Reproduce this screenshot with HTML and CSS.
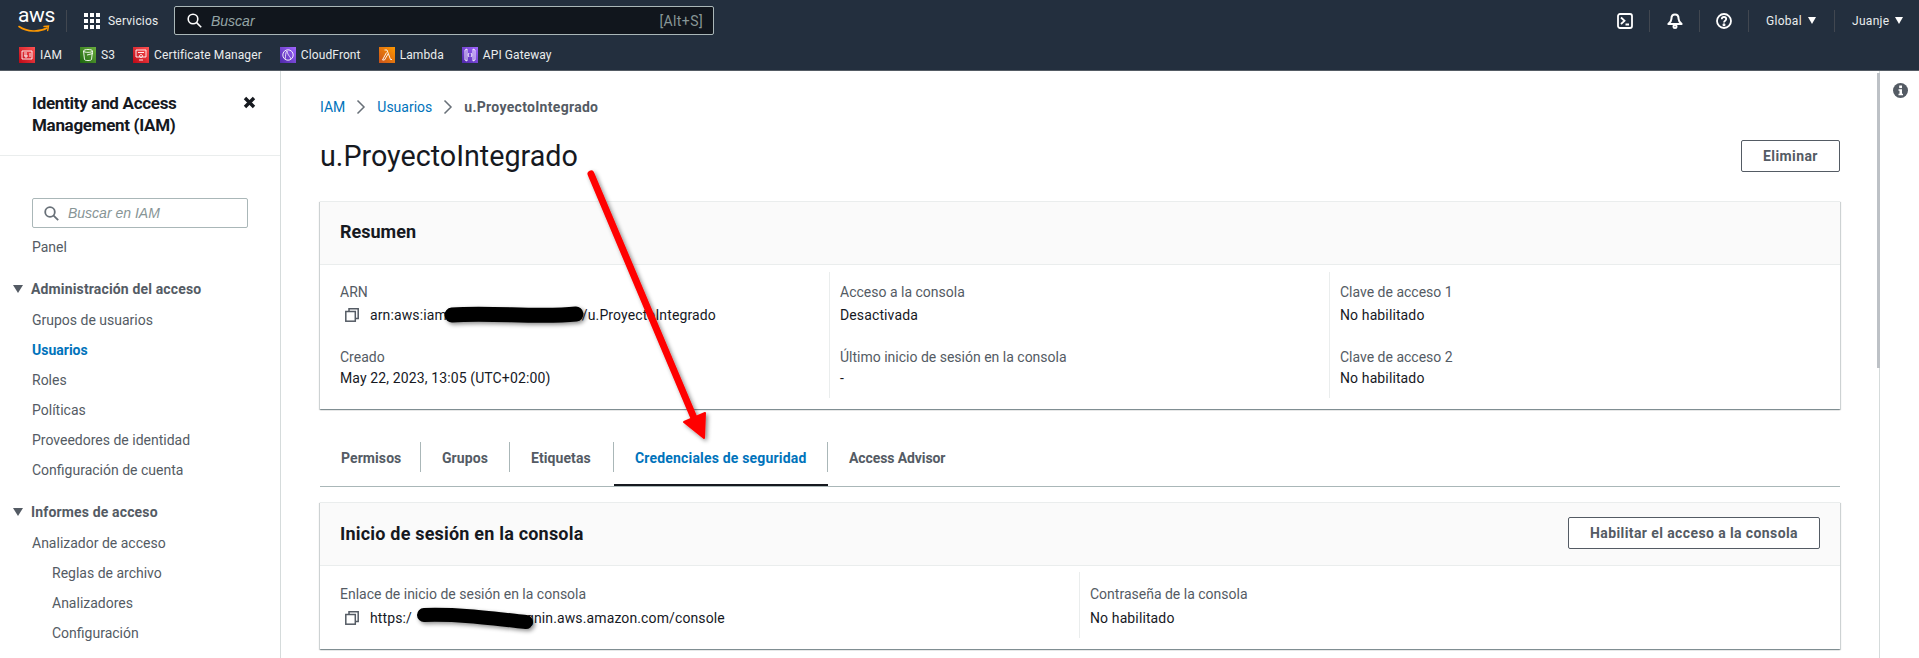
FILE: index.html
```html
<!DOCTYPE html>
<html lang="es">
<head>
	<meta charset="UTF-8">
	<title>u.ProyectoIntegrado - IAM</title>
	<link rel="stylesheet" href="styles.css">
</head>
<body>
	<header class="topbar">
		<div class="toprow">
			<div class="logo">
				<span class="logo-text">aws</span>
				<svg class="logo-smile" width="32" height="9" viewBox="0 0 32 9"><path d="M1 1.5C9 7 21 7.5 29 3" fill="none" stroke="#f90" stroke-width="1.6" stroke-linecap="round"/><path d="M26 1.5l4.500-.5-.8 4.500" fill="none" stroke="#f90" stroke-width="1.4" stroke-linecap="round"/></svg>
			</div>
			<span class="divider first"></span>
			<svg class="grid-icon" width="16" height="16" viewBox="0 0 16 16" fill="#fff"><rect width="4" height="4"/><rect x="6" width="4" height="4"/><rect x="12" width="4" height="4"/><rect y="6" width="4" height="4"/><rect x="6" y="6" width="4" height="4"/><rect x="12" y="6" width="4" height="4"/><rect y="12" width="4" height="4"/><rect x="6" y="12" width="4" height="4"/><rect x="12" y="12" width="4" height="4"/></svg>
			<span class="services">Servicios</span>
			<div class="topsearch">
				<svg width="15" height="15" viewBox="0 0 15 15" fill="none" stroke="#fff" stroke-width="1.6"><circle cx="6" cy="6" r="4.8"/><path d="M9.6 9.6l4.6 4.6"/></svg>
				<span class="placeholder">Buscar</span>
				<span class="shortcut">[Alt+S]</span>
			</div>
			<div class="topicons">
				<svg class="ti-a" width="16" height="16" viewBox="0 0 16 16" fill="none" stroke="#fff" stroke-width="1.8"><rect x="1" y="1" width="14" height="14" rx="2"/><path d="M4 4.5L7.5 7.8 4 11M8.5 11.5h3.5"/></svg>
				<span class="divider"></span>
				<svg class="ti-b" width="16" height="16" viewBox="0 0 16 16" fill="none" stroke="#fff" stroke-width="2"><path d="M8 1.5c-2.6 0-3.6 2-3.6 4.400 0 2-1.200 3.400-3 5.100h13.200c-1.800-1.700-3-3.100-3-5.100C11.600 3.500 10.600 1.500 8 1.500z" stroke-linejoin="round"/><circle cx="8" cy="13.500" r="1.500"/></svg>
				<span class="divider"></span>
				<svg class="ti-c" width="16" height="16" viewBox="0 0 16 16" fill="none" stroke="#fff" stroke-width="1.8"><circle cx="8" cy="8" r="7"/><path d="M5.800 6.200C5.800 4.900 6.800 4 8 4s2.200.9 2.200 2.100c0 1.700-2.200 1.700-2.200 3.400"/><circle cx="8" cy="11.800" r=".6" fill="#fff"/></svg>
				<span class="divider"></span>
				<span class="menu">Global <i class="caret"></i></span>
				<span class="divider"></span>
				<span class="menu user">Juanje <i class="caret"></i></span>
			</div>
		</div>
		<div class="favs">
			<span class="fav"><svg class="ic-red" width="16" height="16" viewBox="0 0 16 16"><path d="M3 4h10v8H3zM5 6h3M5 8h1v2h2V8H6M10 7h2M10 9h2" fill="none" stroke="#fff" stroke-width=".9"/></svg>IAM</span>
			<span class="fav"><svg class="ic-green" width="16" height="16" viewBox="0 0 16 16"><path d="M3.500 4c0-2 9-2 9 0l-1 8.500c-.3 1.400-6.700 1.400-7 0zM3.500 4c0 1.800 9 1.800 9 0M7 8l6-1.500" fill="none" stroke="#fff" stroke-width=".9"/></svg>S3</span>
			<span class="fav"><svg class="ic-red" width="16" height="16" viewBox="0 0 16 16"><path d="M3 3h10v7H3zM5 5.500h6M8 7.500a1.500 1.500 0 1 0 .01 0M6 13h4" fill="none" stroke="#fff" stroke-width=".9"/></svg>Certificate Manager</span>
			<span class="fav"><svg class="ic-purple" width="16" height="16" viewBox="0 0 16 16"><circle cx="8" cy="8" r="5.200" fill="none" stroke="#fff" stroke-width=".9"/><path d="M5 12c1-3 0-6 2-8M11 12c-1-3-3-3-4-8" fill="none" stroke="#fff" stroke-width=".8"/></svg>CloudFront</span>
			<span class="fav"><svg class="ic-orange" width="16" height="16" viewBox="0 0 16 16"><path d="M5.500 3H8l3.500 9.500H13M9 7l-3.500 6H3.500l4-7.500" fill="none" stroke="#fff" stroke-width=".9"/></svg>Lambda</span>
			<span class="fav"><svg class="ic-purple" width="16" height="16" viewBox="0 0 16 16"><path d="M3 3v10l2 1V2zM13 3v10l-2 1V2zM7 6L6 8l1 2M9 6l1 2-1 2" fill="none" stroke="#fff" stroke-width=".9"/></svg>API Gateway</span>
		</div>
	</header>

	<div class="layout">
		<aside class="sidebar">
			<div class="side-head">
				<h2>Identity and Access Management (IAM)</h2>
				<svg class="close" width="13" height="13" viewBox="0 0 13 13"><path d="M2 2l9 9M11 2l-9 9" stroke="#16191f" stroke-width="3.400"/></svg>
			</div>
			<div class="side-search">
				<svg width="15" height="15" viewBox="0 0 15 15" fill="none" stroke="#687078" stroke-width="1.800"><circle cx="6" cy="6" r="4.800"/><path d="M9.600 9.600l4.600 4.600"/></svg>
				<span>Buscar en IAM</span>
			</div>
			<a class="nav first">Panel</a>
			<div class="nav-group"><i class="tri"></i>Administración del acceso</div>
			<a class="nav">Grupos de usuarios</a>
			<a class="nav active">Usuarios</a>
			<a class="nav">Roles</a>
			<a class="nav">Políticas</a>
			<a class="nav">Proveedores de identidad</a>
			<a class="nav">Configuración de cuenta</a>
			<div class="nav-group"><i class="tri"></i>Informes de acceso</div>
			<a class="nav">Analizador de acceso</a>
			<a class="nav sub">Reglas de archivo</a>
			<a class="nav sub">Analizadores</a>
			<a class="nav sub">Configuración</a>
		</aside>

		<main class="content">
			<nav class="crumbs">
				<a>IAM</a>
				<svg width="10" height="16" viewBox="0 0 10 16" fill="none" stroke="#687078" stroke-width="1.500"><path d="M1.500 1.500L8 8l-6.500 6.500"/></svg>
				<a>Usuarios</a>
				<svg width="10" height="16" viewBox="0 0 10 16" fill="none" stroke="#687078" stroke-width="1.500"><path d="M1.500 1.500L8 8l-6.500 6.500"/></svg>
				<span>u.ProyectoIntegrado</span>
			</nav>
			<div class="title-row">
				<h1>u.ProyectoIntegrado</h1>
				<button class="btn">Eliminar</button>
			</div>

			<section class="card summary">
				<div class="card-head"><h3>Resumen</h3></div>
				<div class="cols">
					<div class="col">
						<div class="label">ARN</div>
						<div class="value copy">
							<svg width="14" height="14" viewBox="0 0 14 14" fill="none" stroke="#545b64" stroke-width="1.500"><rect x=".8" y="3.500" width="9.500" height="9.700"/><path d="M4 3.500V.8h9.200V10.500h-2.900"/></svg>
							<span>arn:aws:iam<span class="gap-arn"></span>/u.ProyectoIntegrado</span>
						</div>
						<div class="label next">Creado</div>
						<div class="value">May 22, 2023, 13:05 (UTC+02:00)</div>
					</div>
					<div class="col">
						<div class="label">Acceso a la consola</div>
						<div class="value">Desactivada</div>
						<div class="label next">Último inicio de sesión en la consola</div>
						<div class="value">-</div>
					</div>
					<div class="col">
						<div class="label">Clave de acceso 1</div>
						<div class="value">No habilitado</div>
						<div class="label next">Clave de acceso 2</div>
						<div class="value">No habilitado</div>
					</div>
				</div>
			</section>

			<div class="tabs">
				<a class="tab"><span>Permisos</span></a>
				<a class="tab"><span>Grupos</span></a>
				<a class="tab"><span>Etiquetas</span></a>
				<a class="tab active"><span>Credenciales de seguridad</span></a>
				<a class="tab last"><span>Access Advisor</span></a>
			</div>

			<section class="card console">
				<div class="card-head">
					<h3>Inicio de sesión en la consola</h3>
					<button class="btn">Habilitar el acceso a la consola</button>
				</div>
				<div class="cols two">
					<div class="col">
						<div class="label">Enlace de inicio de sesión en la consola</div>
						<div class="value copy">
							<svg width="14" height="14" viewBox="0 0 14 14" fill="none" stroke="#545b64" stroke-width="1.500"><rect x=".8" y="3.500" width="9.500" height="9.700"/><path d="M4 3.500V.8h9.200V10.500h-2.900"/></svg>
							<span>https:/<span class="gap-url"></span>gnin.aws.amazon.com/console</span>
						</div>
					</div>
					<div class="col">
						<div class="label">Contraseña de la consola</div>
						<div class="value">No habilitado</div>
					</div>
				</div>
			</section>
		</main>

		<aside class="helppane">
			<div class="scroll-thumb"></div>
			<svg class="info" width="15" height="15" viewBox="0 0 15 15"><circle cx="7.500" cy="7.500" r="7.500" fill="#545b64"/><rect x="6.200" y="2.500" width="2.800" height="2.600" fill="#fff"/><path d="M5.500 6.300H9v4.500h1v1.500H5.500v-1.500h1V7.800h-1z" fill="#fff"/></svg>
		</aside>
	</div>

	<!-- marks drawn on top of the screenshot -->
	<svg class="marks" width="1919" height="658" viewBox="0 0 1919 658">
		<defs>
			<filter id="soft" x="-20%" y="-20%" width="140%" height="140%"><feDropShadow dx="2" dy="2" stdDeviation="2" flood-color="#000" flood-opacity=".45"/></filter>
		</defs>
		<g filter="url(#soft)">
			<path d="M591 174L694 418" stroke="#f00" stroke-width="7" stroke-linecap="round" fill="none"/>
			<path d="M684 422L705 413L704 438Z" fill="#f00" stroke="#f00" stroke-width="2" stroke-linejoin="round"/>
		</g>
		<g filter="url(#soft)">
			<path d="M452 315C490 312 540 318 576 314" stroke="#000" stroke-width="15" stroke-linecap="round" fill="none"/>
			<path d="M424 615C460 614 490 618 526 622" stroke="#000" stroke-width="14" stroke-linecap="round" fill="none"/>
		</g>
	</svg>
</body>
</html>
```

FILE: styles.css
```css
* {
	box-sizing: border-box;
}
html, body {
	margin: 0;
	height: 658px;
	overflow: hidden;
}
body {
	position: relative;
	background-color: #fff;
	color: #16191f;
	font-family: Roboto, "Noto Sans", sans-serif;
	font-size: 14px;
}
h1, h2, h3 {
	margin: 0;
}

/* top bar */
.topbar {
	height: 71px;
	background-color: #232f3e;
	border-bottom: 1px solid #545b64;
	color: #eaeded;
	font-size: 12px;
}
.toprow {
	display: flex;
	align-items: center;
	height: 40px;
	padding-top: 1px;
}
.logo {
	display: flex;
	flex-direction: column;
	width: 32px;
	margin-left: 18px;
	color: #fff;
}
.logo-text {
	font-size: 21px;
	line-height: 17px;
	letter-spacing: -.3px;
}
.logo-smile {
	margin-top: 1px;
}
.divider {
	width: 1px;
	height: 22px;
	background-color: #414750;
}
.divider.first {
	margin-left: 16px;
}
.grid-icon {
	margin-left: 17px;
}
.services {
	margin-left: 8px;
	width: 66px;
	letter-spacing: .2px;
}
.topsearch {
	display: flex;
	align-items: center;
	width: 540px;
	height: 29px;
	padding: 0 10px 0 12px;
	background-color: #11161d;
	border: 1px solid #aab7b8;
	border-radius: 2px;
}
.placeholder {
	margin-left: 9px;
	font-family: "Liberation Sans", sans-serif;
	font-size: 14px;
	font-style: italic;
	color: #95a5a6;
}
.shortcut {
	margin-left: auto;
	color: #879596;
	font-size: 14px;
	letter-spacing: .4px;
}
.topicons {
	display: flex;
	align-items: center;
	margin-left: auto;
}
.ti-a {
	margin-right: 16px;
}
.ti-b {
	margin: 0 16px 0 17px;
}
.ti-c {
	margin: 0 16px;
}
.menu {
	display: flex;
	align-items: center;
	width: 85px;
	padding-left: 17px;
	letter-spacing: .3px;
}
.menu.user {
	width: 84px;
}
.caret {
	width: 0;
	height: 0;
	margin-left: 6px;
	border-left: 4px solid transparent;
	border-right: 4px solid transparent;
	border-top: 7px solid #fff;
}
.favs {
	display: flex;
	align-items: center;
	height: 30px;
	padding-left: 19px;
	gap: 18px;
}
.fav {
	display: flex;
	align-items: center;
	gap: 5px;
	letter-spacing: .1px;
}
.ic-red {
	background: linear-gradient(45deg, #bd0816, #ff5252);
}
.ic-green {
	background: linear-gradient(45deg, #1b660f, #6cae3e);
}
.ic-purple {
	background: linear-gradient(45deg, #4d27a8, #a166ff);
}
.ic-orange {
	background: linear-gradient(45deg, #c8511b, #f90);
}

/* page */
.layout {
	display: flex;
	height: 587px;
}
.sidebar {
	flex: none;
	width: 281px;
	border-right: 1px solid #d5dbdb;
	color: #545b64;
}
.side-head {
	display: flex;
	justify-content: space-between;
	height: 85px;
	padding: 21px 24px 0 32px;
	border-bottom: 1px solid #eaeded;
}
.side-head h2 {
	width: 190px;
	color: #16191f;
	font-size: 17px;
	font-weight: 700;
	line-height: 22px;
	letter-spacing: -.3px;
}
.close {
	margin-top: 4px;
}
.side-search {
	display: flex;
	align-items: center;
	gap: 9px;
	width: 216px;
	height: 30px;
	margin: 42px 0 0 32px;
	padding-left: 11px;
	border: 1px solid #aab7b8;
	border-radius: 2px;
	color: #879596;
	font-family: "Liberation Sans", sans-serif;
	font-size: 14px;
	font-style: italic;
}
.nav {
	display: block;
	padding-left: 32px;
	line-height: 30px;
}
.nav.first {
	margin-top: 4px;
}
.nav.sub {
	padding-left: 52px;
}
.nav.active {
	color: #0073bb;
	font-weight: 700;
}
.nav-group {
	display: flex;
	align-items: center;
	margin: 12px 0 1px;
	padding-left: 13px;
	font-weight: 700;
	line-height: 30px;
	letter-spacing: .15px;
}
.tri {
	width: 0;
	height: 0;
	margin-right: 8px;
	border-left: 5px solid transparent;
	border-right: 5px solid transparent;
	border-top: 8px solid #545b64;
}

.content {
	flex: 1;
	padding: 26px 39px 0 39px;
	min-width: 0;
}
.crumbs {
	display: flex;
	align-items: center;
	gap: 11px;
	height: 20px;
	color: #545b64;
	font-weight: 700;
}
.crumbs a {
	color: #0073bb;
	font-weight: 400;
}
.crumbs span {
	letter-spacing: .3px;
}
.title-row {
	display: flex;
	justify-content: space-between;
	align-items: center;
	height: 36px;
	margin-top: 21px;
}
h1 {
	font-size: 28.7px;
	font-weight: 400;
	line-height: 36px;
}
.btn {
	height: 32px;
	padding: 0;
	background-color: #fff;
	border: 1px solid #545b64;
	border-radius: 2px;
	color: #545b64;
	font-family: inherit;
	font-size: 14px;
	font-weight: 700;
	letter-spacing: .4px;
}
.title-row .btn {
	width: 99px;
}

.card {
	background-color: #fff;
	border-top: 1px solid #eaeded;
	box-shadow: 0 1px 1px 0 rgba(0, 28, 36, .3), 1px 1px 1px 0 rgba(0, 28, 36, .15), -1px 1px 1px 0 rgba(0, 28, 36, .15);
}
.summary {
	margin-top: 27px;
}
.card-head {
	display: flex;
	justify-content: space-between;
	align-items: center;
	height: 63px;
	padding: 0 20px 2px;
	background-color: #fafafa;
	border-bottom: 1px solid #eaeded;
}
.summary .card-head {
	padding-bottom: 4px;
}
.card-head h3 {
	font-size: 18px;
	font-weight: 700;
}
.console h3 {
	letter-spacing: .2px;
}
.cols {
	display: grid;
	grid-template-columns: 509px 500px 1fr;
	padding: 7px 0 11px;
}
.col {
	padding: 10px 0 10px 10px;
	border-left: 1px solid #eaeded;
}
.col:first-child {
	padding-left: 20px;
	border-left: 0;
}
.label {
	color: #545b64;
	line-height: 20px;
}
.value {
	margin-top: 3px;
	line-height: 20px;
	letter-spacing: .12px;
}
.label.next {
	margin-top: 22px;
}
.label.next + .value {
	margin-top: 1px;
}
.copy {
	display: flex;
	align-items: center;
	padding-left: 5px;
	gap: 11px;
}
.gap-arn {
	display: inline-block;
	width: 135px;
}
.gap-url {
	display: inline-block;
	width: 114px;
}

.tabs {
	display: grid;
	grid-template-columns: 101px 89px 104px 214px 1fr;
	margin-top: 21px;
	border-bottom: 1px solid #aab7b8;
}
.tab {
	height: 56px;
	padding-top: 12px;
	border-bottom: 2px solid transparent;
	color: #545b64;
	font-weight: 700;
}
.tab span {
	display: block;
	height: 30px;
	padding-left: 21px;
	line-height: 33px;
	letter-spacing: .08px;
	border-right: 1px solid #aab7b8;
}
.tab.last span {
	border-right: 0;
	letter-spacing: -.1px;
}
.tab.active {
	color: #0073bb;
	border-bottom-color: #16191f;
}
.tab.active span {
	letter-spacing: .18px;
}

.console {
	margin-top: 15px;
}
.console .btn {
	width: 252px;
}
.cols.two {
	grid-template-columns: 759px 1fr;
	padding: 6px 0 11px;
}
.cols.two .col {
	padding: 12px 0 10px 10px;
}
.cols.two .col:first-child {
	padding-left: 20px;
}
.cols.two .value {
	margin-top: 4px;
}

.helppane {
	position: relative;
	flex: none;
	width: 40px;
	border-left: 1px solid #d5dbdb;
}
.scroll-thumb {
	position: absolute;
	top: 2px;
	left: -3px;
	width: 3px;
	height: 295px;
	background-color: #bdc1c6;
}
.info {
	position: absolute;
	top: 12px;
	left: 13px;
}
.marks {
	position: absolute;
	top: 0;
	left: 0;
	pointer-events: none;
}
```
